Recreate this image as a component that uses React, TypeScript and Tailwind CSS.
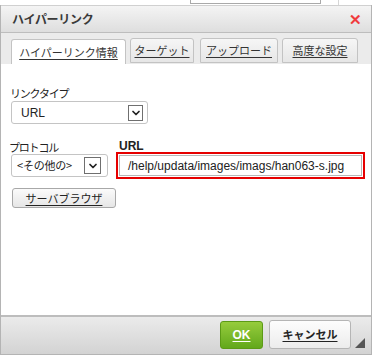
import { ChevronDown } from "lucide-react";

const jp = { fontFamily: '"Noto Sans CJK JP", "Noto Sans", sans-serif' };
const latin = { fontFamily: '"Liberation Sans", Arial, sans-serif' };

function Tab({ label, active, w, ml }: { label: string; active?: boolean; w: string; ml: string }) {
  return (
    <div
      className={`${w} ${ml} h-[25px] flex items-center justify-center rounded-t-[3px] border border-[#c3c3c3] text-[11px] text-[#333] underline underline-offset-2 ${
        active ? "bg-white border-b-white h-[26px] -mb-px" : "bg-gradient-to-b from-[#f6f6f6] to-[#e6e6e6] mb-px"
      }`}
      style={jp}
    >
      {label}
    </div>
  );
}

function ArrowBox({ w, h }: { w: string; h: string }) {
  return (
    <div className={`${w} ${h} border border-[#6f6f6f] bg-white flex items-center justify-center`}>
      <ChevronDown size={12} strokeWidth={3.5} className="text-[#222]" />
    </div>
  );
}

export default function App() {
  return (
    <div className="w-[374px] h-[358px] bg-white overflow-hidden">
      {/* bout de page derrière la boîte */}
      <div className="h-[5px] flex">
        <div className="ml-[190px] w-[131px] h-[4px] border-x border-b border-[#a9a9a9] bg-white" />
        <div className="ml-[17px] w-px h-[5px] bg-[#d6d6d6]" />
      </div>

      <div className="w-[372px] h-[350px] border-x border-b border-[#b4b4b4] flex flex-col">
        {/* titre */}
        <div className="h-[28px] shrink-0 flex items-center justify-between pl-[11px] pr-[9px] bg-gradient-to-b from-[#f4f4f4] to-[#dedede] border-t border-b border-[#bdbdbd] border-t-[#d0d0d0]">
          <span className="text-[12px] font-bold text-[#3a3a3a] tracking-[-0.3px]" style={jp}>
            ハイパーリンク
          </span>
          <span className="text-[#f03c3c] text-[15px] font-bold leading-none" style={latin}>
            ✕
          </span>
        </div>

        {/* onglets */}
        <div className="h-[31px] shrink-0 bg-[#ebebeb] flex items-end pl-[10px]">
          <Tab label="ハイパーリンク情報" active w="w-[115px]" ml="ml-0" />
          <Tab label="ターゲット" w="w-[64px]" ml="ml-[4px]" />
          <Tab label="アップロード" w="w-[78px]" ml="ml-[6px]" />
          <Tab label="高度な設定" w="w-[76px]" ml="ml-[4px]" />
        </div>

        {/* contenu */}
        <div className="flex-1 bg-white pl-[9px] pt-[21px] text-[#222]">
          <div className="h-[16px] text-[11px] leading-[16px] tracking-[-1.2px]" style={jp}>
            リンクタイプ
          </div>
          <div className="ml-px w-[137px] h-[23px] border border-[#c4c4c4] rounded-[3px] flex items-center justify-between pl-[9px] pr-[4px]">
            <span className="text-[12px]" style={latin}>URL</span>
            <ArrowBox w="w-[15px]" h="h-[16px]" />
          </div>

          <div className="flex mt-[17px] ml-px">
            <div className="w-[97px]">
              <div className="h-[13px] -ml-[2px] text-[11px] leading-[13px] tracking-[-1.2px]" style={jp}>
                プロトコル
              </div>
              <div className="w-[97px] h-[23px] border border-[#c4c4c4] rounded-[3px] flex items-center justify-between pl-[5px] pr-[6px]">
                <span className="text-[11px] tracking-[-0.2px]" style={jp}>&lt;その他の&gt;</span>
                <ArrowBox w="w-[17px]" h="h-[17px]" />
              </div>
            </div>
            <div className="ml-[8px]">
              <div className="h-[11px] pl-[3px] text-[12px] font-bold leading-[11px]" style={latin}>
                URL
              </div>
              <div className="w-[249px] h-[27px] border-2 border-[#e60000] p-px">
                <div className="h-full border border-[#b8b8b8] bg-white flex items-center pl-[8px] text-[12px] text-[#222]" style={latin}>
                  /help/updata/images/imags/han063-s.jpg
                </div>
              </div>
            </div>
          </div>

          <div
            className="mt-[9px] ml-[2px] w-[104px] h-[20px] border border-[#a8a8a8] rounded-[3px] bg-gradient-to-b from-[#fbfbfb] to-[#e6e6e6] flex items-center justify-center text-[11px] text-[#222] underline underline-offset-2"
            style={jp}
          >
            サーバブラウザ
          </div>
        </div>

        {/* pied */}
        <div className="h-[39px] shrink-0 border-t-2 border-[#bdbdbd] bg-gradient-to-b from-[#ebebeb] to-[#d3d3d3] flex items-start justify-end pt-[4px] pr-[6px]">
          <div
            className="w-[43px] h-[28px] rounded-[3px] border border-[#5c9a16] bg-gradient-to-b from-[#96cc3c] to-[#62a81a] flex items-center justify-center text-[12px] font-bold text-white underline underline-offset-2"
            style={latin}
          >
            OK
          </div>
          <div
            className="ml-[6px] w-[82px] h-[29px] -mt-px rounded-[3px] border border-[#b5b5b5] bg-gradient-to-b from-[#fdfdfd] to-[#ececec] flex items-center justify-center text-[11px] font-bold text-[#222] underline underline-offset-2"
            style={jp}
          >
            キャンセル
          </div>
          <svg width="10" height="10" viewBox="0 0 10 10" className="ml-[4px] mt-[17px]">
            <polygon points="10,0 10,10 0,10" fill="#555" />
          </svg>
        </div>
      </div>
    </div>
  );
}
